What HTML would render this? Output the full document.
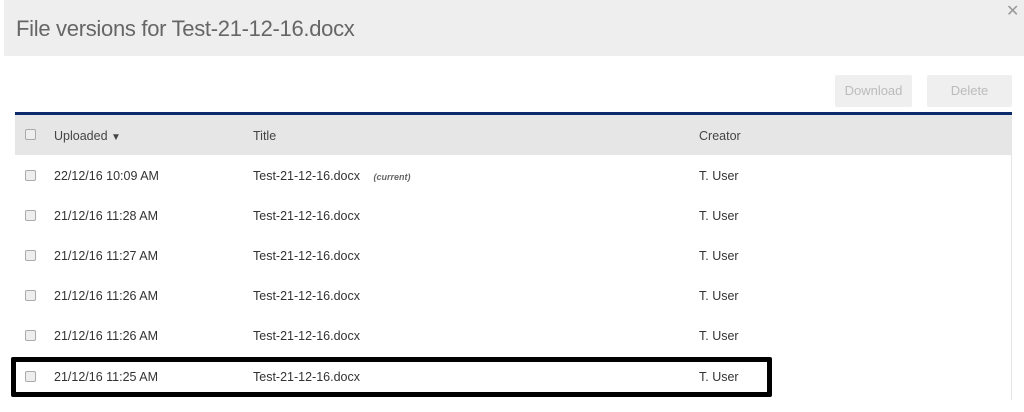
<!DOCTYPE html>
<html><head><style>
body{margin:0;width:1024px;height:412px;background:#fff;font-family:"Liberation Sans",sans-serif;position:relative;overflow:hidden;color:#333}
.hdr{position:absolute;left:4px;top:0;width:1020px;height:56px;background:#eeeeee}
.ttl{position:absolute;left:12px;top:16px;font-size:22px;color:#666;letter-spacing:-0.3px}
.x{position:absolute;left:1006px;top:1px;font-size:16px;color:#999}
.btn{position:absolute;top:75px;height:32px;background:#efefef;color:#bbb;font-size:13px;line-height:32px;text-align:center;border-radius:2px}
.bar{position:absolute;left:15px;top:112px;width:997px;height:3px;background:#0d2a6b}
.th{position:absolute;left:15px;top:115px;width:997px;height:40px;background:#e6e6e6}
.rb{position:absolute;left:1011px;top:155px;width:1px;height:245px;background:#e4e4e4}
.row{position:absolute;left:15px;width:996px;height:40px;font-size:12.5px;color:#333}
.row span{position:absolute;top:13px}
.cb{position:absolute;left:10px;top:14px;width:9px;height:9px;border:1px solid #aaa;border-radius:2px;background:#eee}
.hl{position:absolute;left:11px;top:357px;width:751px;height:30px;border:5px solid #000;border-radius:2px}
</style></head><body>
<div class="hdr"><div class="ttl">File versions for Test-21-12-16.docx</div></div>
<div class="x">✕</div>
<div class="btn" style="left:835px;width:77px">Download</div>
<div class="btn" style="left:927px;width:85px">Delete</div>
<div class="bar"></div>
<div class="th"></div>
<div class="rb"></div>
<div class="row" style="top:116px;color:#444"><div class="cb" style="top:13px"></div><span style="left:39px">Uploaded <span style="position:static;font-size:10px">▼</span></span><span style="left:238px">Title</span><span style="left:684px">Creator</span></div>
<div class="row" style="top:156px"><div class="cb"></div><span style="left:39px">22/12/16 10:09 AM</span><span style="left:238px">Test-21-12-16.docx <i style="font-size:9px;color:#666;margin-left:10px;font-weight:bold">(current)</i></span><span style="left:684px">T. User</span></div>
<div class="row" style="top:196px"><div class="cb"></div><span style="left:39px">21/12/16 11:28 AM</span><span style="left:238px">Test-21-12-16.docx</span><span style="left:684px">T. User</span></div>
<div class="row" style="top:236px"><div class="cb"></div><span style="left:39px">21/12/16 11:27 AM</span><span style="left:238px">Test-21-12-16.docx</span><span style="left:684px">T. User</span></div>
<div class="row" style="top:276px"><div class="cb"></div><span style="left:39px">21/12/16 11:26 AM</span><span style="left:238px">Test-21-12-16.docx</span><span style="left:684px">T. User</span></div>
<div class="row" style="top:316px"><div class="cb"></div><span style="left:39px">21/12/16 11:26 AM</span><span style="left:238px">Test-21-12-16.docx</span><span style="left:684px">T. User</span></div>
<div class="row" style="top:357px"><div class="cb"></div><span style="left:39px">21/12/16 11:25 AM</span><span style="left:238px">Test-21-12-16.docx</span><span style="left:684px">T. User</span></div>
<div class="hl"></div>
</body></html>
